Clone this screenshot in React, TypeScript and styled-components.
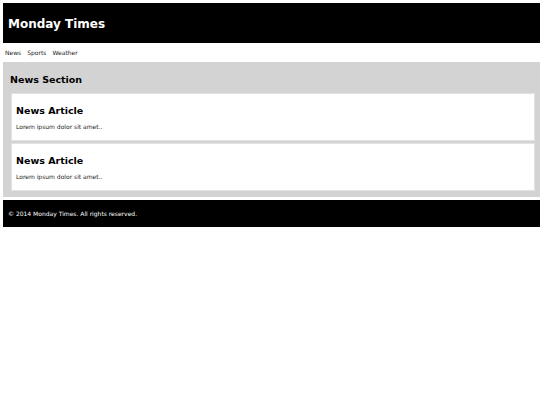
import { createGlobalStyle, styled } from 'styled-components';

const GlobalStyle = createGlobalStyle`
  html, body {
    margin: 0;
    padding: 0;
    background: #ffffff;
  }
  body {
    font-family: "DejaVu Sans", Verdana, sans-serif;
    color: #222;
  }
`;

const articles = [
  { title: 'News Article', body: 'Lorem ipsum dolor sit amet..' },
  { title: 'News Article', body: 'Lorem ipsum dolor sit amet..' },
];

const App = () => {
  return (
    <>
      <GlobalStyle />
      <Page>
        <Header>
          <Title>Monday Times</Title>
        </Header>
        <Nav>
          <NavLink>News</NavLink>
          <NavLink>Sports</NavLink>
          <NavLink>Weather</NavLink>
        </Nav>
        <Section>
          <SectionTitle>News Section</SectionTitle>
          <ArticleList>
            {articles.map((article, i) => (
              <Article key={i}>
                <ArticleTitle>{article.title}</ArticleTitle>
                <ArticleBody>{article.body}</ArticleBody>
              </Article>
            ))}
          </ArticleList>
        </Section>
        <Footer>
          <FooterText>© 2014 Monday Times. All rights reserved.</FooterText>
        </Footer>
      </Page>
    </>
  );
};
export default App;

const Page = styled.div`
  padding: 3px 0 0 3px;
  display: flex;
  flex-direction: column;
`;

const Header = styled.header`
  height: 38px;
  background-color: #000;
  display: flex;
  align-items: center;
  padding: 2px 0 0 5px;
`;

const Title = styled.h1`
  margin: 0;
  font-size: 12px;
  font-weight: bold;
  color: #fff;
`;

const Nav = styled.nav`
  height: 19px;
  display: flex;
  align-items: center;
  gap: 6px;
  padding-left: 2px;
`;

const NavLink = styled.span`
  font-size: 6px;
  color: #222;
`;

const Section = styled.section`
  background-color: #d3d3d3;
  padding: 11px 5px 6px 8px;
`;

const SectionTitle = styled.h2`
  margin: 0 0 6px -1px;
  font-size: 9.5px;
  line-height: 14px;
  font-weight: bold;
  color: #000;
`;

const ArticleList = styled.div`
  display: flex;
  flex-direction: column;
  gap: 2px;
`;

const Article = styled.article`
  height: 46px;
  background-color: #fff;
  border: 1px solid #e2e2e2;
  padding-left: 4px;
  display: flex;
  flex-direction: column;
`;

const ArticleTitle = styled.h2`
  margin: 10px 0 0;
  font-size: 9.5px;
  line-height: 13px;
  font-weight: bold;
  color: #000;
`;

const ArticleBody = styled.p`
  margin: 6px 0 0;
  font-size: 6px;
  line-height: 8px;
  color: #222;
`;

const Footer = styled.footer`
  margin-top: 3px;
  height: 27px;
  background-color: #000;
  display: flex;
  align-items: center;
  padding-left: 5px;
`;

const FooterText = styled.p`
  margin: 0;
  font-size: 6px;
  color: #fff;
`;
